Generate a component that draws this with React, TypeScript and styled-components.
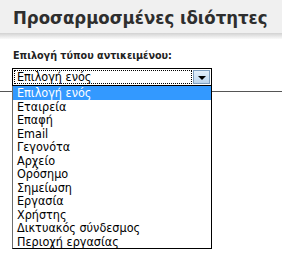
import React from "react";
import styled, { createGlobalStyle } from "styled-components";

const GlobalStyle = createGlobalStyle`
  html, body {
    margin: 0;
    padding: 0;
    background: #ffffff;
  }
  body {
    font-family: "DejaVu Sans Condensed", "DejaVu Sans", Verdana, sans-serif;
    font-stretch: condensed;
  }
`;

const Page = styled.div`
  width: 282px;
  height: 259px;
  overflow: hidden;
  background: #ffffff;
`;

const Header = styled.div`
  height: 32px;
  background: #f0f0f0;
  display: flex;
  align-items: center;
  padding-left: 13px;
  padding-top: 1px;
  box-sizing: content-box;
`;

const HeaderShadow = styled.div`
  height: 6px;
  background: linear-gradient(#d2d2d2, #fafafa);
`;

const HeaderTitle = styled.h1`
  margin: 0;
  font-size: 18.4px;
  font-weight: bold;
  color: #2e2e2e;
  white-space: nowrap;
`;

const Section = styled.div`
  padding: 10px 0 0 12px;
`;

const Label = styled.div`
  font-size: 10.7px;
  font-weight: bold;
  color: #222222;
  padding-left: 1px;
  height: 19px;
`;

const SelectWrap = styled.div`
  position: relative;
  width: 200px;
`;

const SelectBox = styled.div`
  box-sizing: border-box;
  height: 18px;
  border: 1px solid #000000;
  background: #ffffff;
  display: flex;
  align-items: stretch;
  padding: 1px;
`;

const SelectValue = styled.div`
  flex: 1;
  border: 1px dotted #000000;
  font-size: 12.5px;
  line-height: 12px;
  padding-left: 2px;
  color: #000000;
  white-space: nowrap;
`;

const ArrowButton = styled.div`
  box-sizing: border-box;
  width: 17px;
  margin-left: 1px;
  border: 1px solid #7d9ebf;
  background: linear-gradient(#e3effa, #bcd6ef);
  display: flex;
  align-items: center;
  justify-content: center;
`;

const Arrow = styled.div`
  width: 0;
  height: 0;
  border-left: 4px solid transparent;
  border-right: 4px solid transparent;
  border-top: 4px solid #000000;
  margin-top: 2px;
`;

const Rule = styled.div`
  margin-top: 5px;
  margin-left: -12px;
  border-top: 1px solid #555555;
`;

const OptionList = styled.ul`
  position: absolute;
  top: 18px;
  left: 0;
  width: 200px;
  box-sizing: border-box;
  margin: 0;
  padding: 0;
  list-style: none;
  background: #ffffff;
  border: 1px solid #000000;
  border-top: 0;
  border-left-color: #6d6d6d;
  z-index: 2;
`;

const OptionItem = styled.li<{ $selected?: boolean }>`
  font-size: 12.5px;
  line-height: 13.5px;
  height: 13.5px;
  padding-left: 4px;
  white-space: nowrap;
  color: ${(p) => (p.$selected ? "#ffffff" : "#000000")};
  background: ${(p) => (p.$selected ? "#3399ff" : "transparent")};
`;

const options = [
  "Επιλογή ενός",
  "Εταιρεία",
  "Επαφή",
  "Email",
  "Γεγονότα",
  "Αρχείο",
  "Ορόσημο",
  "Σημείωση",
  "Εργασία",
  "Χρήστης",
  "Δικτυακός σύνδεσμος",
  "Περιοχή εργασίας",
];

const App = () => {
  return (
    <Page>
      <GlobalStyle />
      <Header>
        <HeaderTitle>Προσαρμοσμένες ιδιότητες</HeaderTitle>
      </Header>
      <HeaderShadow />
      <Section>
        <Label>Επιλογή τύπου αντικειμένου:</Label>
        <SelectWrap>
          <SelectBox>
            <SelectValue>Επιλογή ενός</SelectValue>
            <ArrowButton>
              <Arrow />
            </ArrowButton>
          </SelectBox>
          <OptionList>
            {options.map((o, i) => (
              <OptionItem key={o} $selected={i === 0}>
                {o}
              </OptionItem>
            ))}
          </OptionList>
        </SelectWrap>
        <Rule />
      </Section>
    </Page>
  );
};

export default App;
